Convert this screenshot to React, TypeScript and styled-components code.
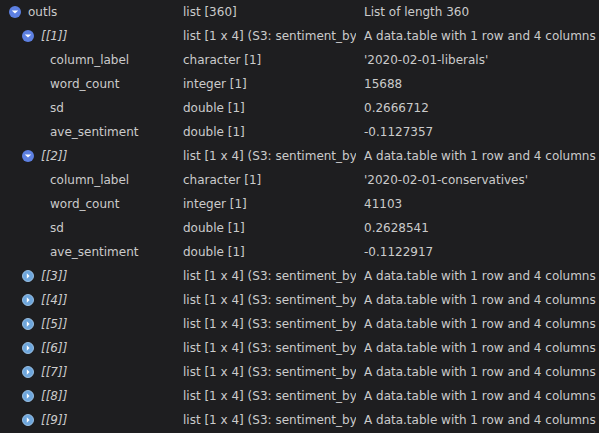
import React from "react";
import styled, { createGlobalStyle } from "styled-components";

const GlobalStyle = createGlobalStyle`
  html, body {
    margin: 0;
    padding: 0;
    background: #1e1e20;
  }
  body {
    font-family: "DejaVu Sans", "Liberation Sans", sans-serif;
    font-size: 12px;
    color: #cbcbcb;
  }
`;

const Grid = styled.div`
  width: 599px;
  height: 433px;
  overflow: hidden;
  background: #1e1e20;
`;

const Row = styled.div`
  display: grid;
  grid-template-columns: 175px 181px 243px;
  height: 24px;
  align-items: center;
`;

const NameCell = styled.div<{ level: number }>`
  display: flex;
  align-items: center;
  padding-left: ${(p) => 9 + p.level * 13}px;
  white-space: nowrap;
  overflow: hidden;
`;

const Label = styled.span<{ italic?: boolean; leaf?: boolean }>`
  font-style: ${(p) => (p.italic ? "italic" : "normal")};
  margin-left: ${(p) => (p.leaf ? "28px" : "7px")};
`;

const Cell = styled.div`
  padding-left: 8px;
  white-space: nowrap;
  overflow: hidden;
`;

const Toggle = ({ open }: { open: boolean }) =>
  open ? (
    <svg width="12" height="12" viewBox="0 0 12 12">
      <circle cx="6" cy="6" r="6" fill="#5d80e2" />
      <path d="M2.8 4.6 H9.2 L6 7.6 Z" fill="#ffffff" />
    </svg>
  ) : (
    <svg width="12" height="12" viewBox="0 0 12 12">
      <circle cx="6" cy="6" r="5.5" fill="#6ea6dc" stroke="#a2c8ec" strokeWidth="0.9" />
      <path d="M4.8 3.2 V8.8 L7.6 6 Z" fill="#ffffff" />
    </svg>
  );

type Item = {
  name: string;
  level: number;
  kind: "open" | "closed" | "leaf";
  italic?: boolean;
  type: string;
  value: string;
};

const listType = "list [1 x 4] (S3: sentiment_by";
const listValue = "A data.table with 1 row and 4 columns";

const rows: Item[] = [
  { name: "outls", level: 0, kind: "open", type: "list [360]", value: "List of length 360" },
  { name: "[[1]]", level: 1, kind: "open", italic: true, type: listType, value: listValue },
  { name: "column_label", level: 1, kind: "leaf", type: "character [1]", value: "'2020-02-01-liberals'" },
  { name: "word_count", level: 1, kind: "leaf", type: "integer [1]", value: "15688" },
  { name: "sd", level: 1, kind: "leaf", type: "double [1]", value: "0.2666712" },
  { name: "ave_sentiment", level: 1, kind: "leaf", type: "double [1]", value: "-0.1127357" },
  { name: "[[2]]", level: 1, kind: "open", italic: true, type: listType, value: listValue },
  { name: "column_label", level: 1, kind: "leaf", type: "character [1]", value: "'2020-02-01-conservatives'" },
  { name: "word_count", level: 1, kind: "leaf", type: "integer [1]", value: "41103" },
  { name: "sd", level: 1, kind: "leaf", type: "double [1]", value: "0.2628541" },
  { name: "ave_sentiment", level: 1, kind: "leaf", type: "double [1]", value: "-0.1122917" },
  ...[3, 4, 5, 6, 7, 8, 9].map(
    (n): Item => ({
      name: `[[${n}]]`,
      level: 1,
      kind: "closed",
      italic: true,
      type: listType,
      value: listValue,
    })
  ),
];

const App = () => {
  return (
    <Grid>
      <GlobalStyle />
      {rows.map((r, i) => (
        <Row key={i}>
          <NameCell level={r.level}>
            {r.kind !== "leaf" && <Toggle open={r.kind === "open"} />}
            <Label italic={r.italic} leaf={r.kind === "leaf"}>
              {r.name}
            </Label>
          </NameCell>
          <Cell>{r.type}</Cell>
          <Cell>{r.value}</Cell>
        </Row>
      ))}
    </Grid>
  );
};

export default App;
